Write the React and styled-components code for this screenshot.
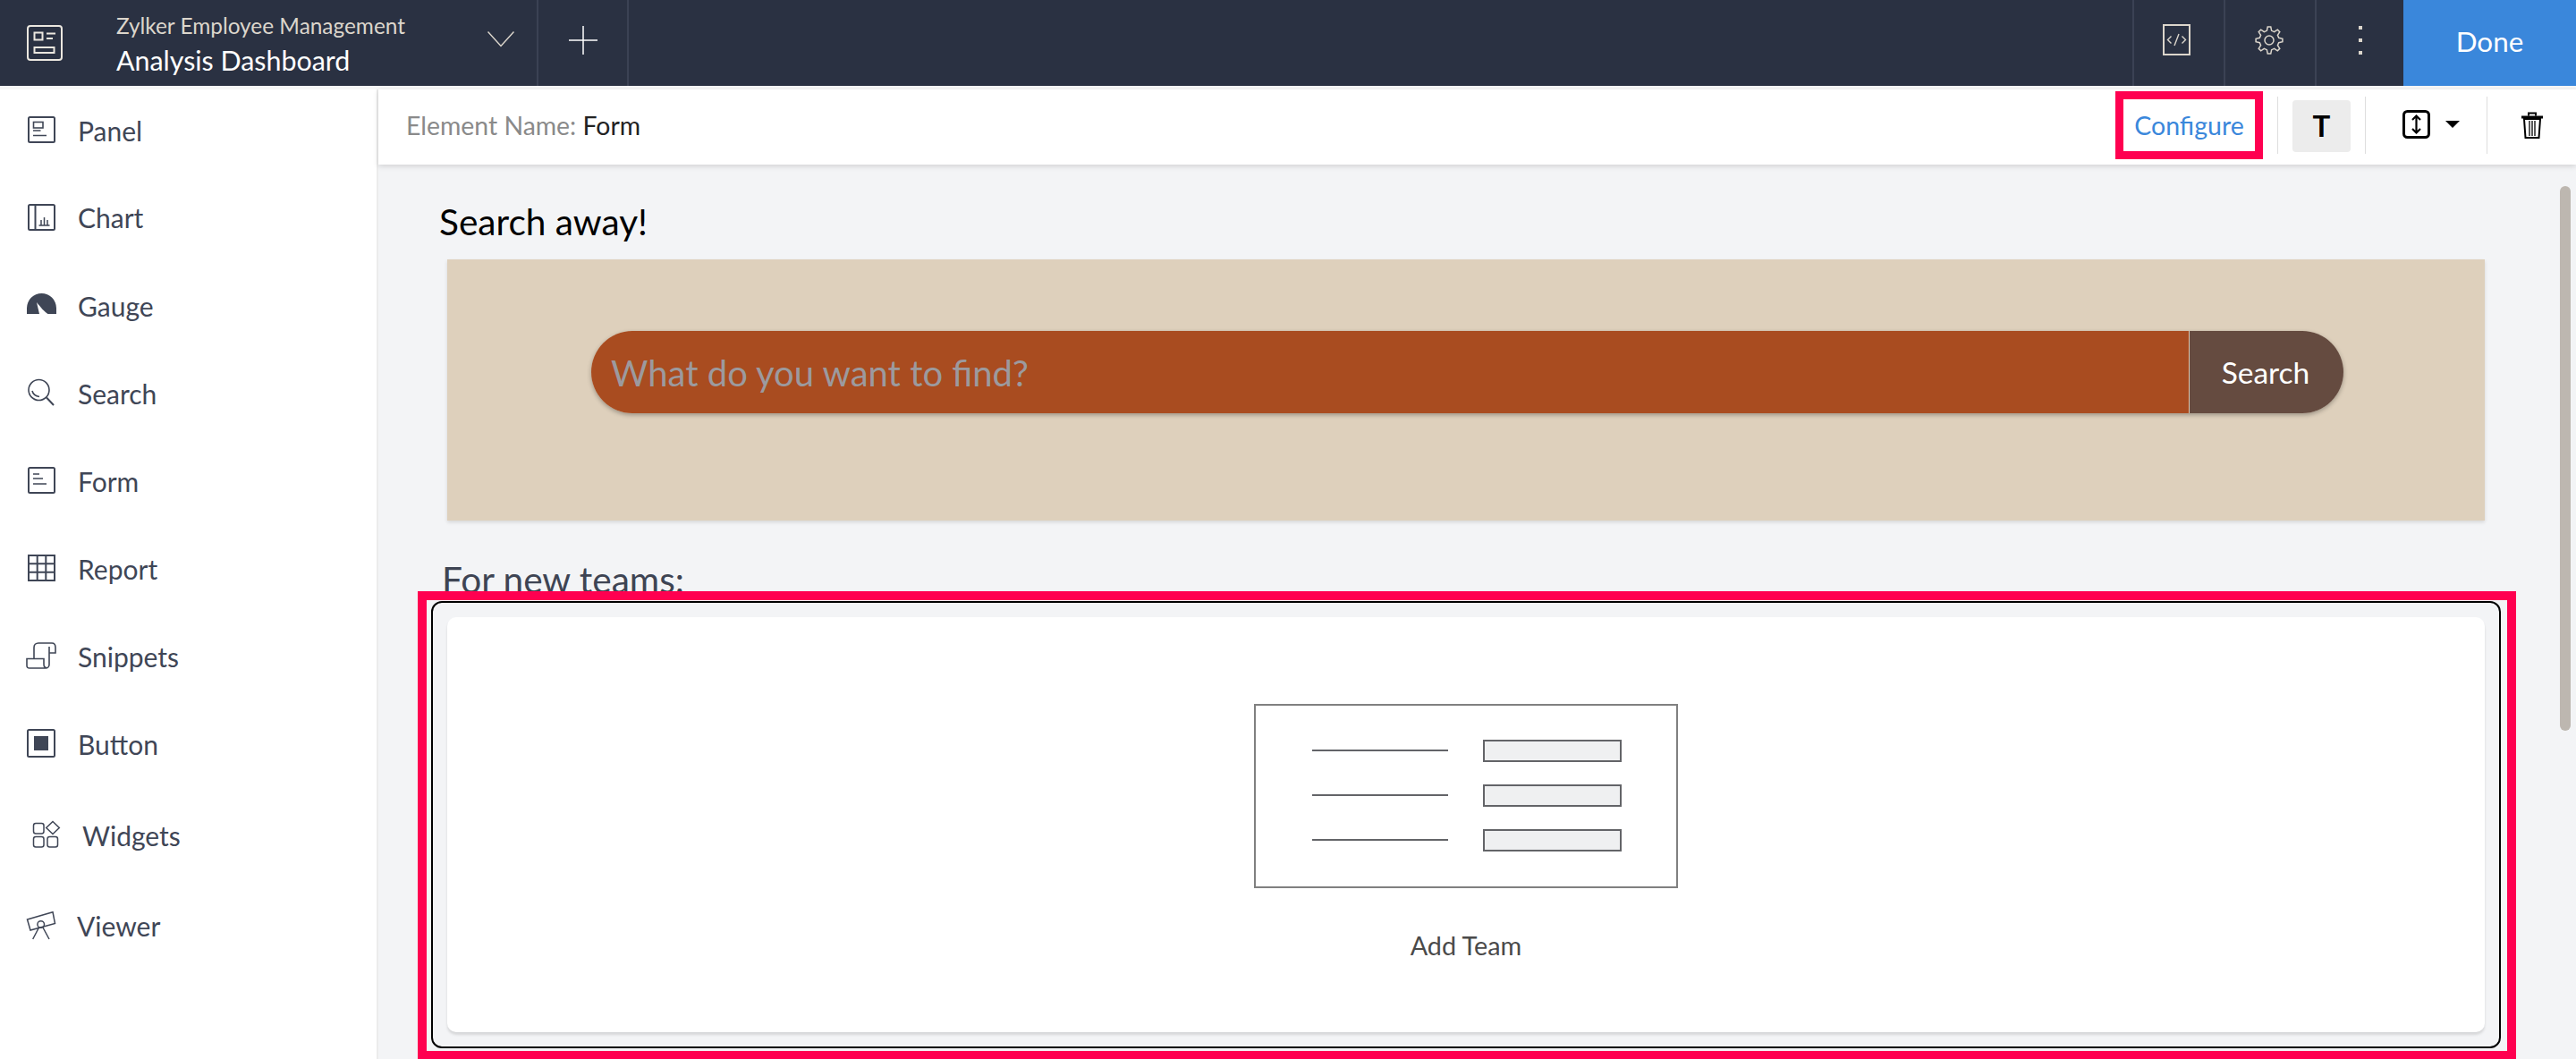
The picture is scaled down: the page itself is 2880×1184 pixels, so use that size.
import React from "react";
import styled, { createGlobalStyle } from "styled-components";

const Global = createGlobalStyle`
  html, body { margin: 0; padding: 0; background: #fff; }
  * { box-sizing: border-box; }
  body { font-family: Lato, "Open Sans", "Liberation Sans", sans-serif; }
`;

const Page = styled.div`
  width: 2880px; height: 1184px; overflow: hidden;
  display: flex; flex-direction: column;
`;
const TopBar = styled.header`
  height: 96px; flex: none; background: #2a3142; display: flex; align-items: stretch;
`;
const LogoCell = styled.div`
  width: 130px; flex: none; display: flex; align-items: center; padding-left: 30px;
`;
const ProjectCell = styled.div`
  width: 472px; flex: none; display: flex; align-items: center; justify-content: space-between;
  padding: 0 25px 8px 0; border-right: 2px solid #3b4254;
`;
const ProjectText = styled.div`
  display: flex; flex-direction: column; gap: 2px; margin-bottom: -8px; padding-top: 4px;
`;
const ProjectName = styled.div`
  font-size: 24.4px; line-height: 34px; color: #dcd6cc; margin-top: -3px;
`;
const PageName = styled.div`
  font-size: 30.4px; line-height: 38px; color: #fff;
`;
const BarCell = styled.div`
  width: ${p => p.$w}px; flex: none; display: flex; align-items: center; justify-content: center;
  padding: 0 ${p => p.$shift || 0}px 7px 0;
  border-left: ${p => (p.$left ? "2px solid #3b4254" : "none")};
  border-right: ${p => (p.$right ? "2px solid #3b4254" : "none")};
`;
const BarSpacer = styled.div`flex: 1;`;
const DoneButton = styled.button`
  width: 193px; flex: none; border: 0; background: #3a87db; color: #fff;
  font: 400 31.4px Lato, sans-serif; padding: 0 0 4px;
`;
const Body = styled.div`
  flex: 1; min-height: 0; display: flex; padding-top: 4px; background: #f6f6f6;
`;
const Sidebar = styled.nav`
  width: 423px; flex: none; background: #fff; border-right: 2px solid #ececec;
`;
const NavRow = styled.div`
  height: ${p => p.$h || 98}px; display: flex; align-items: center; gap: ${p => p.$gap ?? 21}px;
  padding-left: ${p => p.$pad ?? 30}px; color: #3f4656; font-size: 30px;
`;
const NavLabel = styled.span`margin-bottom: 2px;`;
const NavIcon = styled.svg`
  width: 36px; height: 34px; flex: none; display: block; overflow: visible;
  fill: none; stroke: #3f4656; stroke-width: 2;
`;
const Main = styled.main`
  flex: 1; min-width: 0; display: flex; flex-direction: column; background: #f3f4f6;
`;
const Toolbar = styled.div`
  height: 84px; flex: none; background: #fff; display: flex; align-items: center;
  padding: 0 37px 0 31px; box-shadow: 0 2px 6px rgba(0, 0, 0, 0.14); position: relative; z-index: 1;
`;
const ElementLabel = styled.span`
  font-size: 28.4px; color: #8a8a8a; flex: 1; margin-bottom: 5px;
`;
const ElementValue = styled.span`color: #222;`;
const ConfigureBox = styled.button`
  width: 165px; height: 76px; margin-bottom: 5px; flex: none; background: #fff;
  border: 9px solid #ff0050; color: #3a87db; padding: 0;
  font: 400 28.5px Lato, sans-serif;
`;
const ToolSep = styled.span`
  width: 1px; height: 64px; margin: 0 16px 4px; background: #dedede; flex: none;
`;
const BoldToggle = styled.button`
  width: 65px; height: 58px; margin-bottom: 2px; flex: none; border: 0; border-radius: 4px; background: #ececec;
  color: #000; font: 700 33px Lato, sans-serif; padding: 0 0 3px;
`;
const HeightControl = styled.div`
  width: 103px; flex: none; display: flex; align-items: center; gap: 17px; padding-left: 25px; margin-bottom: 6px;
`;
const Caret = styled.span`
  width: 0; height: 0; flex: none;
  border-left: 8px solid transparent; border-right: 8px solid transparent; border-top: 8px solid #000;
`;
const TrashCell = styled.div`
  padding-left: 22px; display: flex; margin-bottom: 4px;
`;
const Workspace = styled.div`
  flex: 1; min-height: 0; display: flex;
`;
const Content = styled.div`
  flex: 1; min-width: 0; overflow: hidden;
`;
const SectionTitle = styled.h2`
  margin: 0; padding-left: ${p => p.$left}px; height: ${p => p.$h}px; padding-top: ${p => p.$top}px;
  font-size: 40.6px; line-height: 48px; font-weight: 400; color: ${p => p.$color};
`;
const SearchPanel = styled.section`
  margin-left: 77px; width: 2278px; height: 292px; background: #ded0bc; padding: 80px 0 0 161px;
  box-shadow: 0 2px 4px rgba(0, 0, 0, 0.12);
`;
const SearchBar = styled.div`
  width: 1959px; height: 92px; display: flex; border-radius: 46px;
  box-shadow: 0 2px 5px rgba(0, 0, 0, 0.3); overflow: hidden;
`;
const SearchInput = styled.input`
  flex: 1; min-width: 0; border: 0; outline: 0; background: #a94c20; padding: 2px 0 0 22px;
  font: 400 40px Lato, sans-serif; color: #fff;
  &::placeholder { color: #9c9a9e; opacity: 1; }
`;
const SearchButton = styled.button`
  width: 173px; flex: none; border: 0; border-left: 1px solid #dcc9b4; background: #654b40; color: #fff;
  font: 400 33.5px Lato, sans-serif; padding: 0 2px 0 0;
`;
const Highlight = styled.section`
  position: relative; z-index: 1; margin-left: 44px; width: 2346px; border: 10px solid #ff0050;
  padding: 1px 7px 3px 5px;
`;
const FormOutline = styled.div`
  height: 500px; border: 2px solid #000; border-radius: 12px; padding: 16px;
`;
const FormCard = styled.div`
  height: 464px; background: #fff; border-radius: 10px;
  box-shadow: 0 3px 3px rgba(0, 0, 0, 0.12); padding-top: 97px;
  display: flex; flex-direction: column; align-items: center;
`;
const Illustration = styled.svg`
  width: 474px; height: 206px; display: block; flex: none;
`;
const CardLabel = styled.div`
  margin-top: 47px; font-size: 28.8px; line-height: 34px; color: #4a4a4a;
`;
const ScrollTrack = styled.div`
  width: 24px; flex: none; padding: 24px 6px 0 6px;
`;
const ScrollThumb = styled.div`
  height: 609px; background: #bdb7b0; border-radius: 6px;
`;
const LineIcon = styled.svg`
  display: block; flex: none; fill: none; stroke: ${p => p.$stroke || "#dcd6cc"}; stroke-width: ${p => p.$sw || 2};
`;
const Dots = styled.div`
  display: flex; flex-direction: column; gap: 10px;
`;
const Dot = styled.span`
  width: 4px; height: 4px; background: #dcd6cc;
`;

const gearPath = (() => {
  const teeth = 8, cx = 16, cy = 16, R = 15, r = 11;
  const pts = [];
  for (let i = 0; i < teeth; i++) {
    const a = (i / teeth) * Math.PI * 2 - Math.PI / 2;
    const w = Math.PI / teeth;
    [[-0.62, r], [-0.3, R], [0.3, R], [0.62, r]].forEach(([f, rad]) => {
      pts.push(`${(cx + Math.cos(a + f * w) * rad).toFixed(2)} ${(cy + Math.sin(a + f * w) * rad).toFixed(2)}`);
    });
  }
  return "M" + pts.join("L") + "Z";
})();

const icons = {
  Panel: (
    <>
      <rect x="2" y="1" width="29" height="28" rx="1.5" />
      <rect x="7.5" y="6.5" width="10.5" height="6.5" strokeWidth="1.6" />
      <path d="M7 16h8.500M7 21.500h15" strokeWidth="1.6" />
    </>
  ),
  Chart: (
    <>
      <rect x="2" y="2" width="29" height="28" rx="1.5" />
      <path d="M9.500 2v28" />
      <path d="M13.500 25h12M16 25v-6M19.500 25v-9M23 25v-6" strokeWidth="1.5" />
    </>
  ),
  Gauge: (
    <path
      d="M0 25V18.500A16.500 16.500 0 0 1 33 18.500V25H23.500C20 23 15 17 11 12L14 25z"
      fill="#3f4656" stroke="none"
    />
  ),
  Search: (
    <>
      <circle cx="13.500" cy="12" r="11.500" strokeWidth="1.6" />
      <path d="M6 13c1 4 4 6 8 6.500" strokeWidth="1.6" />
      <path d="M22 20.500l8 8.500" />
    </>
  ),
  Form: (
    <>
      <rect x="2" y="1" width="29" height="28" rx="1.5" />
      <path d="M7 8h7M7 13h11M7 19h15" strokeWidth="1.6" />
    </>
  ),
  Report: (
    <path d="M2 1h29v28H2zM2 10.300h29M2 19.700h29M11.700 1v28M21.300 1v28" />
  ),
  Snippets: (
    <>
      <path d="M8 18V6c0-3 2-5 5-5h15c3 0 4 2 4 5v6h-7" strokeWidth="1.6" />
      <path d="M25 5v20c0 2-1.500 4-4 4H3c-2 0-3-1-3-3v-7.500h19v6c0 2 1 4 3 4" strokeWidth="1.6" />
    </>
  ),
  Button: (
    <>
      <rect x="1" y="0" width="30" height="30" rx="1.500" />
      <rect x="8" y="7" width="16" height="16" fill="#3f4656" stroke="none" />
    </>
  ),
  Widgets: (
    <>
      <rect x="2.500" y="2.500" width="11.500" height="11.500" rx="2.500" strokeWidth="1.500" />
      <rect x="2.500" y="17.500" width="11.500" height="11.500" rx="2.500" strokeWidth="1.500" />
      <rect x="18" y="17.500" width="11.500" height="11.500" rx="2.500" strokeWidth="1.500" />
      <path d="M24 0.500l7.300 7-7.300 7-7.300-7z" strokeWidth="1.500" />
    </>
  ),
  Viewer: (
    <>
      <path d="M0.500 9L29 0.800l2.500 12.700L4 21z" strokeWidth="1.500" />
      <circle cx="15.700" cy="14.500" r="3.800" strokeWidth="1.500" />
      <path d="M13.500 18L6.700 31M18 18l7 13" strokeWidth="1.500" />
    </>
  ),
};

const navItems = [
  { name: "Panel", h: 94 },
  { name: "Chart", h: 100 },
  { name: "Gauge" },
  { name: "Search" },
  { name: "Form" },
  { name: "Report" },
  { name: "Snippets" },
  { name: "Button" },
  { name: "Widgets", h: 106, pad: 35, gap: 21 },
  { name: "Viewer", h: 96, gap: 20 },
];

const rows = [52, 102, 152];

export default function App() {
  return (
    <Page>
      <Global />
      <TopBar>
        <LogoCell>
          <LineIcon width="40" height="40" viewBox="0 0 40 40" $stroke="#ebe7df">
            <rect x="1" y="1" width="38" height="38" rx="3" />
            <rect x="8.500" y="8.500" width="9" height="8" />
            <path d="M22 9.500h10M22 15h7" />
            <rect x="8.500" y="25" width="22" height="6" />
          </LineIcon>
        </LogoCell>
        <ProjectCell>
          <ProjectText>
            <ProjectName>Zylker Employee Management</ProjectName>
            <PageName>Analysis Dashboard</PageName>
          </ProjectText>
          <LineIcon width="30" height="18" viewBox="0 0 30 18" $sw="1.500">
            <path d="M0.500 0.500L15 16.500 29.500 0.500" />
          </LineIcon>
        </ProjectCell>
        <BarCell $w={101} $right>
          <LineIcon width="32" height="32" viewBox="0 0 32 32" $stroke="#fff" $sw="1.500">
            <path d="M16 0v32M0 16h32" />
          </LineIcon>
        </BarCell>
        <BarSpacer />
        <BarCell $w={102} $left $shift={6}>
          <LineIcon width="31" height="35" viewBox="0 0 31 35" $sw="2">
            <rect x="1" y="1" width="29" height="33" />
            <path d="M9.500 13.500l-4 4 4 4M21.500 13.500l4 4-4 4M18 11l-5 13" strokeWidth="1.400" />
          </LineIcon>
        </BarCell>
        <BarCell $w={102} $left $shift={3}>
          <LineIcon width="32" height="32" viewBox="0 0 32 32" $sw="1.500">
            <path d={gearPath} />
            <circle cx="16" cy="16" r="5" />
          </LineIcon>
        </BarCell>
        <BarCell $w={99} $left>
          <Dots><Dot /><Dot /><Dot /></Dots>
        </BarCell>
        <DoneButton>Done</DoneButton>
      </TopBar>
      <Body>
        <Sidebar>
          {navItems.map(({ name, h, pad, gap }) => (
            <NavRow key={name} $h={h} $pad={pad} $gap={gap}>
              <NavIcon viewBox="0 0 36 34">{icons[name]}</NavIcon>
              <NavLabel>{name}</NavLabel>
            </NavRow>
          ))}
        </Sidebar>
        <Main>
          <Toolbar>
            <ElementLabel>Element Name: <ElementValue>Form</ElementValue></ElementLabel>
            <ConfigureBox>Configure</ConfigureBox>
            <ToolSep />
            <BoldToggle>T</BoldToggle>
            <ToolSep />
            <HeightControl>
              <LineIcon width="31" height="32" viewBox="0 0 31 32" $stroke="#000" $sw="3">
                <rect x="1.500" y="1.500" width="28" height="29" rx="4" />
                <path d="M15.500 7v18M11 11l4.500-4.500L20 11M11 21l4.500 4.500L20 21" strokeWidth="2.200" />
              </LineIcon>
              <Caret />
            </HeightControl>
            <ToolSep />
            <TrashCell>
              <LineIcon width="24" height="30" viewBox="0 0 24 30" $stroke="#000" $sw="2">
                <path d="M0 6h24" strokeWidth="3" />
                <path d="M8 4.500V1.500h8v3" />
                <path d="M3 8l1.500 21h15L21 8z" />
                <path d="M9 10v17M12 10v17M15 10v17" strokeWidth="1.300" />
              </LineIcon>
            </TrashCell>
          </Toolbar>
          <Workspace>
            <Content>
              <SectionTitle $left={68} $h={106} $top={40} $color="#000">Search away!</SectionTitle>
              <SearchPanel>
                <SearchBar>
                  <SearchInput placeholder="What do you want to find?" readOnly />
                  <SearchButton>Search</SearchButton>
                </SearchBar>
              </SearchPanel>
              <SectionTitle $left={71} $h={79} $top={42} $color="#3e4453">For new teams:</SectionTitle>
              <Highlight>
                <FormOutline>
                  <FormCard>
                    <Illustration viewBox="0 0 474 206">
                      <rect x="1" y="1" width="472" height="204" fill="#fff" stroke="#808080" strokeWidth="2" />
                      {rows.map(y => (
                        <g key={y}>
                          <path d={`M65 ${y}H217`} stroke="#636468" strokeWidth="2" />
                          <rect x="257" y={y - 11} width="153" height="23" fill="#eff0f1" stroke="#636468" strokeWidth="2" />
                        </g>
                      ))}
                    </Illustration>
                    <CardLabel>Add Team</CardLabel>
                  </FormCard>
                </FormOutline>
              </Highlight>
            </Content>
            <ScrollTrack><ScrollThumb /></ScrollTrack>
          </Workspace>
        </Main>
      </Body>
    </Page>
  );
}
